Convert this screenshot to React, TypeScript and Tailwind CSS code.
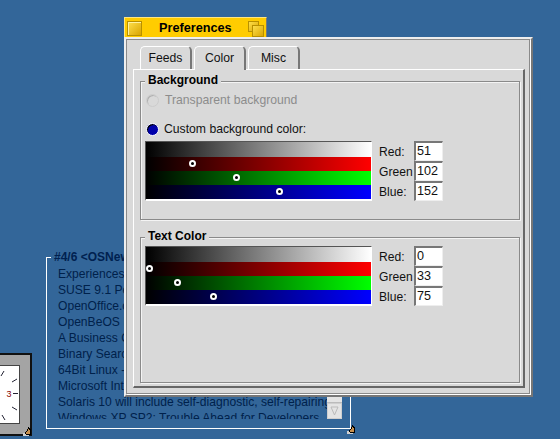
const font = { fontFamily: '"Liberation Sans", Arial, sans-serif' };

function Handle({ className }: { className: string }) {
  return (
    <svg className={`absolute ${className}`} width="9" height="9" viewBox="0 0 9 9" shapeRendering="crispEdges">
      <rect x="0" y="6" width="6" height="3" fill="#d0d0d0" />
      <path d="M5 0h1v1h1v1h1v6h-5v-1h-1v-2h1v-1h1v-2h1z" fill="#000" />
      <path d="M5 2h1v1h1v4h-4v-2h1v-1h1z" fill="#c8914f" />
    </svg>
  );
}

function Band({ bg, value }: { bg: string; value: number }) {
  return (
    <div className={`relative h-[14px] ${bg}`}>
      <span
        className="absolute top-[3px] w-[7px] h-[7px] rounded-full border-2 border-white bg-black"
        style={{ left: Math.floor(value * 0.86) }}
      />
    </div>
  );
}

function ColorRow({ r, g, b }: { r: number; g: number; b: number }) {
  const rows: [string, number][] = [['Red:', r], ['Green', g], ['Blue:', b]];
  return (
    <div className="flex ml-[4px]">
      <div className="w-[227px] h-[60px] border-t border-l border-[#555] border-b-2 border-b-white border-r border-r-white bg-black">
        <div className="h-[15px] bg-[linear-gradient(to_right,#000,#fff)]" />
        <Band bg="bg-[linear-gradient(to_right,#000,#f00)]" value={r} />
        <Band bg="bg-[linear-gradient(to_right,#000,#0f0)]" value={g} />
        <Band bg="bg-[linear-gradient(to_right,#000,#00f)]" value={b} />
      </div>
      <div className="ml-[7px] flex flex-col">
        {rows.map(([label, v]) => (
          <div key={label} className="flex h-[20px] items-center">
            <span className="w-[35px] pt-[2px] text-[12.1px] text-[#111]">{label}</span>
            <span className="w-[29px] h-[20px] bg-white border-t-2 border-l-2 border-[#777] border-r border-b border-r-[#eee] border-b-[#eee] pl-[1px] text-[12.6px] leading-[17px] text-[#111]">
              {v}
            </span>
          </div>
        ))}
      </div>
    </div>
  );
}

function Group({ title, className, children }: { title: string; className: string; children: React.ReactNode }) {
  return (
    <div className={`relative border border-[#8a8a8a] shadow-[inset_1px_1px_0_#f4f4f4,1px_1px_0_#f4f4f4] ${className}`}>
      <span className="absolute left-[4px] top-[-9px] px-[3px] bg-[#d9d9d9] text-[12px] leading-[15px] font-bold text-black">{title}</span>
      {children}
    </div>
  );
}

const tabs = ['Feeds', 'Color', 'Misc'];
const news = [
  'Experiences with the new release',
  'SUSE 9.1 Personal Edition review',
  'OpenOffice.org 1.1.2 released',
  'OpenBeOS Interview and Update',
  'A Business Case for Linux',
  'Binary Search Trees Explained',
  '64Bit Linux - A Look at the Future',
  'Microsoft Internet Explorer News',
  'Solaris 10 will include self-diagnostic, self-repairing',
  'Windows XP SP2: Trouble Ahead for Developers',
];

export default function App() {
  return (
    <div className="relative w-[560px] h-[439px] overflow-hidden bg-[#336699]" style={font}>
      {/* Clock window */}
      <div className="absolute left-[-60px] top-[353px] w-[92px] h-[83px] border-2 border-[#111] bg-[#a4a4a4] p-[10px]">
        <div className="w-full h-full bg-white border border-[#444]">
          <svg width="66" height="59" viewBox="0 0 66 59">
            <g stroke="#223" strokeWidth="1">
              <path d="M60 27.5 H65" />
              <path d="M59 16 L64 13" />
              <path d="M59 41 L64 44" />
              <path d="M48 10 L51 5" />
              <path d="M49 49 L52 54" />
            </g>
            <text x="56" y="31" fontSize="9" fill="#800" textAnchor="middle" fontFamily="Liberation Sans">3</text>
          </svg>
        </div>
      </div>
      <Handle className="left-[23px] top-[427px]" />

      {/* Newsbox */}
      <div className="absolute left-[46px] top-[257px] w-[305px] h-[172px] border-l border-b border-r border-white">
        <div className="absolute left-0 top-0 w-[4px] h-px bg-white" />
        <div className="absolute left-[7px] top-[-7px] text-[12px] leading-[15px] font-bold text-[#002150] whitespace-nowrap">#4/6 &lt;OSNews&gt;</div>
        <div className="pl-[11px] pt-[9px] h-[162px] overflow-hidden text-[12.1px] leading-[16px] text-[#00214b] whitespace-nowrap">
          {news.map((n) => (
            <div key={n}>{n}</div>
          ))}
        </div>
        <div className="absolute left-[280px] top-[140px] w-[15px] h-[22px] bg-[#e4e4e4] flex flex-col">
          <div className="h-[6px] border-b border-[#bbb]" />
          <svg width="15" height="16" viewBox="0 0 15 16">
            <path d="M4 4 H11 L7.5 12 Z" fill="none" stroke="#bbb" />
            <rect x="0.5" y="0.5" width="14" height="15" fill="none" stroke="#cfcfcf" />
          </svg>
        </div>
      </div>
      <Handle className="left-[347px] top-[425px]" />

      {/* Preferences window */}
      <div className="absolute left-[124px] top-[17px] w-[143px] h-[20px] bg-[#ffcc00] border-t border-l border-t-[#ffe680] border-l-[#ffe680] border-r border-r-[#777] flex items-start pt-[3px] pl-[2px]">
        <div className="w-[15px] h-[15px] border border-[#b89000] bg-[linear-gradient(135deg,#ffe14d,#d9a400)] shadow-[inset_1px_1px_0_#fff3a0]" />
        <span className="ml-[17px] mt-[-1px] text-[12.7px] leading-[16px] font-bold text-black">Preferences</span>
        <svg className="ml-auto mr-[1px]" width="17" height="16" viewBox="0 0 17 16" shapeRendering="crispEdges">
          <defs>
            <linearGradient id="zoomGold" x1="0" y1="0" x2="1" y2="1">
              <stop offset="0" stopColor="#ffe14d" />
              <stop offset="1" stopColor="#d9a400" />
            </linearGradient>
          </defs>
          <rect x="0.5" y="0.5" width="10" height="10" fill="url(#zoomGold)" stroke="#b89000" />
          <rect x="4.5" y="4.5" width="11" height="11" fill="url(#zoomGold)" stroke="#b89000" />
        </svg>
      </div>
      <div className="absolute left-[124px] top-[37px] w-[409px] h-[360px] bg-[#d9d9d9] border-t-2 border-l-2 border-t-[#eee] border-l-[#eee] border-r-2 border-r-[#777] border-b-2 border-b-[#777] pr-[1px] pb-[1px]">
        <div className="h-full border border-[#8a8a8a] shadow-[1px_1px_0_#fff]">
          <div className="flex pl-[13px] h-[29px] items-end gap-[2px]">
            {tabs.map((t) => (
              <div
                key={t}
                className={`w-[52px] rounded-t-[5px] border-t border-l border-white border-r-2 border-r-[#777] bg-[#d9d9d9] flex items-center justify-center text-[12.2px] text-[#111] ${t === 'Color' ? 'h-[24px] relative z-10 mb-[-1px]' : 'h-[23px]'}`}
              >
                {t}
              </div>
            ))}
          </div>
          <div className="ml-[6px] w-[392px] h-[319px] border-t border-l border-white border-r-2 border-r-[#666] border-b-2 border-b-[#666] pl-[6px] pt-[11px]">
            <Group title="Background" className="w-[380px] h-[139px]">
              <div className="flex items-center gap-[6px] ml-[5px] mt-[9px] h-[18px]">
                <span className="w-[13px] h-[13px] rounded-full bg-[#d9d9d9] border border-[#ccc] shadow-[inset_1px_1px_0_#b0b0b0]" />
                <span className="text-[12.2px] text-[#8c8c8c]">Transparent background</span>
              </div>
              <div className="flex items-center gap-[5px] ml-[5px] mt-[11px] h-[18px]">
                <span className="w-[13px] h-[13px] rounded-full bg-[#0000aa] border border-white shadow-[inset_1px_1px_0_#000]" />
                <span className="text-[12.2px] text-[#111]">Custom background color:</span>
              </div>
              <div className="mt-[3px]">
                <ColorRow r={51} g={102} b={152} />
              </div>
            </Group>
            <Group title="Text Color" className="w-[380px] h-[146px] mt-[17px]">
              <div className="mt-[8px]">
                <ColorRow r={0} g={33} b={75} />
              </div>
            </Group>
          </div>
        </div>
      </div>
    </div>
  );
}
